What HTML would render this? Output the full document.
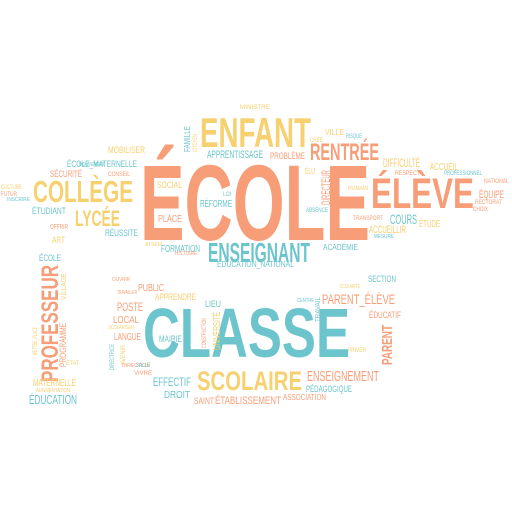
<!DOCTYPE html>
<html><head><meta charset="utf-8"><style>
html,body{margin:0;padding:0;background:#fff;width:512px;height:512px;overflow:hidden}
svg{display:block}
text{font-family:"Liberation Sans",sans-serif}
.o{fill:#f79e78}.y{fill:#f7d070}.t{fill:#6cc5cd}
.b{font-weight:bold}
</style></head><body>
<svg width="512" height="512" viewBox="0 0 512 512" xmlns="http://www.w3.org/2000/svg">
<text class="o b" x="140" y="240" font-size="108" textLength="230" lengthAdjust="spacingAndGlyphs">ÉCOLE</text>
<text class="t b" x="143" y="357" font-size="70" textLength="207" lengthAdjust="spacingAndGlyphs">CLASSE</text>
<text class="o b" x="371" y="208" font-size="43" textLength="103" lengthAdjust="spacingAndGlyphs">ÉLÈVE</text>
<text class="y b" x="200" y="147" font-size="42" textLength="111" lengthAdjust="spacingAndGlyphs">ENFANT</text>
<text class="y b" x="33" y="202" font-size="31" textLength="100" lengthAdjust="spacingAndGlyphs">COLLÈGE</text>
<text class="t b" x="208" y="262" font-size="28" textLength="102" lengthAdjust="spacingAndGlyphs">ENSEIGNANT</text>
<text class="y b" x="197" y="390" font-size="27" textLength="105" lengthAdjust="spacingAndGlyphs">SCOLAIRE</text>
<text class="o b" x="58" y="382" font-size="24" textLength="117" lengthAdjust="spacingAndGlyphs" transform="rotate(-90 58 382)">PROFESSEUR</text>
<text class="y b" x="75" y="226" font-size="22" textLength="45" lengthAdjust="spacingAndGlyphs">LYCÉE</text>
<text class="o b" x="310" y="160" font-size="24" textLength="69" lengthAdjust="spacingAndGlyphs">RENTRÉE</text>
<text class="o" x="307" y="381" font-size="15" textLength="72" lengthAdjust="spacingAndGlyphs">ENSEIGNEMENT</text>
<text class="o" x="322" y="304" font-size="14" textLength="73" lengthAdjust="spacingAndGlyphs">PARENT_ÉLÈVE</text>
<text class="t" x="29" y="404" font-size="13" textLength="48" lengthAdjust="spacingAndGlyphs">ÉDUCATION</text>
<text class="t" x="207" y="158" font-size="11" textLength="56" lengthAdjust="spacingAndGlyphs">APPRENTISSAGE</text>
<text class="t" x="390" y="224" font-size="14" textLength="27" lengthAdjust="spacingAndGlyphs">COURS</text>
<text class="y" x="369" y="233" font-size="11" textLength="37" lengthAdjust="spacingAndGlyphs">ACCUEILLIR</text>
<text class="y" x="383" y="167" font-size="12" textLength="37" lengthAdjust="spacingAndGlyphs">DIFFICULTÉ</text>
<text class="t" x="153" y="386" font-size="12" textLength="38" lengthAdjust="spacingAndGlyphs">EFFECTIF</text>
<text class="o" x="215" y="404" font-size="11" textLength="66" lengthAdjust="spacingAndGlyphs">ÉTABLISSEMENT</text>
<text class="o b" x="392" y="365" font-size="15" textLength="40" lengthAdjust="spacingAndGlyphs" transform="rotate(-90 392 365)">PARENT</text>
<text class="o" x="330" y="205" font-size="12" textLength="35" lengthAdjust="spacingAndGlyphs" transform="rotate(-90 330 205)">DIRECTEUR</text>
<text class="o" x="158" y="222" font-size="10" textLength="24" lengthAdjust="spacingAndGlyphs">PLACE</text>
<text class="y" x="157" y="188" font-size="9" textLength="25" lengthAdjust="spacingAndGlyphs">SOCIAL</text>
<text class="t" x="161" y="252" font-size="10" textLength="39" lengthAdjust="spacingAndGlyphs">FORMATION</text>
<text class="t" x="200" y="207" font-size="10" textLength="32" lengthAdjust="spacingAndGlyphs">RÉFORME</text>
<text class="o" x="479" y="198" font-size="11" textLength="25" lengthAdjust="spacingAndGlyphs">ÉQUIPE</text>
<text class="t" x="67" y="167" font-size="9" textLength="70" lengthAdjust="spacingAndGlyphs">ÉCOLE_MATERNELLE</text>
<text class="o" x="50" y="177" font-size="9" textLength="32" lengthAdjust="spacingAndGlyphs">SÉCURITÉ</text>
<text class="t" x="32" y="214" font-size="9" textLength="34" lengthAdjust="spacingAndGlyphs">ÉTUDIANT</text>
<text class="t" x="105" y="236" font-size="9" textLength="33" lengthAdjust="spacingAndGlyphs">RÉUSSITE</text>
<text class="y" x="33" y="386" font-size="10" textLength="43" lengthAdjust="spacingAndGlyphs">MATERNELLE</text>
<text class="o" x="117" y="311" font-size="12" textLength="26" lengthAdjust="spacingAndGlyphs">POSTE</text>
<text class="o" x="113" y="323" font-size="10" textLength="26" lengthAdjust="spacingAndGlyphs">LOCAL</text>
<text class="o" x="114" y="340" font-size="10" textLength="27" lengthAdjust="spacingAndGlyphs">LANGUE</text>
<text class="y" x="155" y="300" font-size="9" textLength="41" lengthAdjust="spacingAndGlyphs">APPRENDRE</text>
<text class="o" x="138" y="291" font-size="10" textLength="26" lengthAdjust="spacingAndGlyphs">PUBLIC</text>
<text class="t" x="306" y="392" font-size="9" textLength="46" lengthAdjust="spacingAndGlyphs">PÉDAGOGIQUE</text>
<text class="o" x="283" y="400" font-size="8" textLength="43" lengthAdjust="spacingAndGlyphs">ASSOCIATION</text>
<text class="t" x="368" y="282" font-size="9" textLength="28" lengthAdjust="spacingAndGlyphs">SECTION</text>
<text class="o" x="369" y="318" font-size="9" textLength="32" lengthAdjust="spacingAndGlyphs">ÉDUCATIF</text>
<text class="y" x="220" y="350" font-size="10" textLength="38" lengthAdjust="spacingAndGlyphs" transform="rotate(-90 220 350)">UNIVERSITÉ</text>
<text class="o" x="206" y="348" font-size="6" textLength="30" lengthAdjust="spacingAndGlyphs" transform="rotate(-90 206 348)">CONSTRUCTION</text>
<text class="t" x="164" y="398" font-size="10" textLength="26" lengthAdjust="spacingAndGlyphs">DROIT</text>
<text class="o" x="194" y="404" font-size="9" textLength="20" lengthAdjust="spacingAndGlyphs">SAINT</text>
<text class="t" x="205" y="307" font-size="9" textLength="16" lengthAdjust="spacingAndGlyphs">LIEU</text>
<text class="t" x="159" y="342" font-size="9" textLength="23" lengthAdjust="spacingAndGlyphs">MAIRIE</text>
<text class="t" x="323" y="250" font-size="8" textLength="35" lengthAdjust="spacingAndGlyphs">ACADÉMIE</text>
<text class="t" x="217" y="267" font-size="8" textLength="77" lengthAdjust="spacingAndGlyphs">ÉDUCATION_NATIONAL</text>
<text class="y" x="108" y="153" font-size="9" textLength="37" lengthAdjust="spacingAndGlyphs">MOBILISER</text>
<text class="y" x="52" y="243" font-size="9" textLength="13" lengthAdjust="spacingAndGlyphs">ART</text>
<text class="t" x="39" y="261" font-size="9" textLength="22" lengthAdjust="spacingAndGlyphs">ÉCOLE</text>
<text class="o" x="50" y="229" font-size="7" textLength="18" lengthAdjust="spacingAndGlyphs">OFFRIR</text>
<text class="y" x="1" y="189" font-size="6" textLength="21" lengthAdjust="spacingAndGlyphs">CULTURE</text>
<text class="o" x="1" y="196" font-size="6" textLength="16" lengthAdjust="spacingAndGlyphs">FUTUR</text>
<text class="t" x="7" y="201" font-size="5" textLength="23" lengthAdjust="spacingAndGlyphs">INSCRIRE</text>
<text class="o" x="270" y="159" font-size="9" textLength="35" lengthAdjust="spacingAndGlyphs">PROBLÈME</text>
<text class="y" x="325" y="135" font-size="8" textLength="19" lengthAdjust="spacingAndGlyphs">VILLE</text>
<text class="t" x="346" y="138" font-size="6" textLength="16" lengthAdjust="spacingAndGlyphs">RISQUE</text>
<text class="y" x="310" y="142" font-size="6" textLength="13" lengthAdjust="spacingAndGlyphs">CRÉÉ</text>
<text class="y" x="430" y="170" font-size="10" textLength="28" lengthAdjust="spacingAndGlyphs">ACCUEIL</text>
<text class="t" x="444" y="175" font-size="6" textLength="38" lengthAdjust="spacingAndGlyphs">PROFESSIONNEL</text>
<text class="o" x="484" y="183" font-size="6" textLength="25" lengthAdjust="spacingAndGlyphs">NATIONAL</text>
<text class="o" x="475" y="204" font-size="6" textLength="27" lengthAdjust="spacingAndGlyphs">RECTORAT</text>
<text class="o" x="473" y="211" font-size="6" textLength="15" lengthAdjust="spacingAndGlyphs">CHOIX</text>
<text class="y" x="419" y="227" font-size="10" textLength="21" lengthAdjust="spacingAndGlyphs">ÉTUDE</text>
<text class="o" x="353" y="220" font-size="6" textLength="30" lengthAdjust="spacingAndGlyphs">TRANSPORT</text>
<text class="y" x="348" y="190" font-size="6" textLength="20" lengthAdjust="spacingAndGlyphs">HUMAIN</text>
<text class="t" x="306" y="212" font-size="6" textLength="22" lengthAdjust="spacingAndGlyphs">ABSENCE</text>
<text class="t" x="374" y="238" font-size="5" textLength="20" lengthAdjust="spacingAndGlyphs">MESURE</text>
<text class="y" x="305" y="174" font-size="8" textLength="10" lengthAdjust="spacingAndGlyphs">ÉLU</text>
<text class="o" x="395" y="175" font-size="6" textLength="25" lengthAdjust="spacingAndGlyphs">RESPECT</text>
<text class="t" x="190" y="152" font-size="8" textLength="26" lengthAdjust="spacingAndGlyphs" transform="rotate(-90 190 152)">FAMILLE</text>
<text class="y" x="197" y="152" font-size="6" textLength="18" lengthAdjust="spacingAndGlyphs" transform="rotate(-90 197 152)">CITOYEN</text>
<text class="o" x="66" y="367" font-size="9" textLength="44" lengthAdjust="spacingAndGlyphs" transform="rotate(-90 66 367)">PROGRAMME</text>
<text class="y" x="37" y="355" font-size="6" textLength="28" lengthAdjust="spacingAndGlyphs" transform="rotate(-90 37 355)">METTRE_PLACE</text>
<text class="y" x="66" y="300" font-size="7" textLength="27" lengthAdjust="spacingAndGlyphs" transform="rotate(-90 66 300)">VILLAGE</text>
<text class="y" x="240" y="109" font-size="6" textLength="30" lengthAdjust="spacingAndGlyphs">MINISTRE</text>
<text class="o" x="175" y="255" font-size="5" textLength="22" lengthAdjust="spacingAndGlyphs">HISTOIRE</text>
<text class="y" x="145" y="246" font-size="5" textLength="17" lengthAdjust="spacingAndGlyphs">ATSEM</text>
<text class="t" x="223" y="196" font-size="6" textLength="8" lengthAdjust="spacingAndGlyphs">LOI</text>
<text class="y" x="348" y="352" font-size="6" textLength="18" lengthAdjust="spacingAndGlyphs">PRIVER</text>
<text class="t" x="297" y="302" font-size="5" textLength="17" lengthAdjust="spacingAndGlyphs">CENTRE</text>
<text class="y" x="340" y="288" font-size="5" textLength="20" lengthAdjust="spacingAndGlyphs">SCOLARITÉ</text>
<text class="t" x="320" y="322" font-size="7" textLength="25" lengthAdjust="spacingAndGlyphs" transform="rotate(-90 320 322)">TRAVAIL</text>
<text class="o" x="134" y="375" font-size="6" textLength="18" lengthAdjust="spacingAndGlyphs">VIVRE</text>
<text class="o" x="122" y="367" font-size="5" textLength="28" lengthAdjust="spacingAndGlyphs">DIRECTION</text>
<text class="t" x="136" y="367" font-size="6" textLength="14" lengthAdjust="spacingAndGlyphs">SALLE</text>
<text class="y" x="125" y="365" font-size="6" textLength="20" lengthAdjust="spacingAndGlyphs" transform="rotate(-90 125 365)">AVENIR</text>
<text class="t" x="114" y="370" font-size="6" textLength="26" lengthAdjust="spacingAndGlyphs" transform="rotate(-90 114 370)">DIRECTRICE</text>
<text class="o" x="117" y="294" font-size="5" textLength="20" lengthAdjust="spacingAndGlyphs">TRAVAILLER</text>
<text class="o" x="112" y="281" font-size="5" textLength="18" lengthAdjust="spacingAndGlyphs">OUVRIR</text>
<text class="y" x="108" y="329" font-size="5" textLength="26" lengthAdjust="spacingAndGlyphs">SCOLARISER</text>
<text class="y" x="36" y="392" font-size="5" textLength="34" lengthAdjust="spacingAndGlyphs">AUGMENTATION</text>
<text class="y" x="66" y="365" font-size="6" textLength="13" lengthAdjust="spacingAndGlyphs">ÉTAT</text>
<text class="o" x="108" y="176" font-size="6" textLength="22" lengthAdjust="spacingAndGlyphs">CONSEIL</text>
<text class="t" x="79" y="166" font-size="5" textLength="26" lengthAdjust="spacingAndGlyphs">MOUVEMENT</text>
</svg>
</body></html>
